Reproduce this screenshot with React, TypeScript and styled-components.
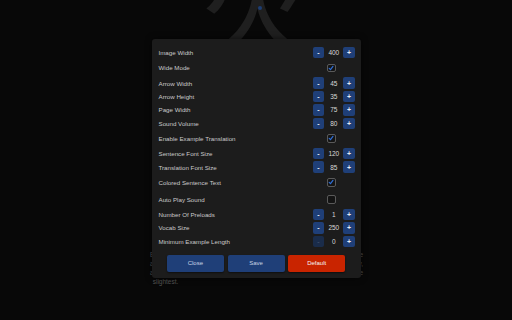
import * as React from "react";
import styled, {createGlobalStyle} from "styled-components";

const GlobalStyle = createGlobalStyle`
  html, body {
    margin: 0;
    padding: 0;
    width: 512px;
    height: 320px;
    overflow: hidden;
    background: #080808;
    font-family: "Liberation Sans", Arial, sans-serif;
  }
`;

interface Setting {
    label: string
    kind: "number" | "check"
    value?: number
    checked?: boolean
    minDisabled?: boolean
}

const settings: Setting[] = [
    {label: "Image Width", kind: "number", value: 400},
    {label: "Wide Mode", kind: "check", checked: true},
    {label: "Arrow Width", kind: "number", value: 45},
    {label: "Arrow Height", kind: "number", value: 35},
    {label: "Page Width", kind: "number", value: 75},
    {label: "Sound Volume", kind: "number", value: 80},
    {label: "Enable Example Translation", kind: "check", checked: true},
    {label: "Sentence Font Size", kind: "number", value: 120},
    {label: "Translation Font Size", kind: "number", value: 85},
    {label: "Colored Sentence Text", kind: "check", checked: true},
    {label: "Auto Play Sound", kind: "check", checked: false},
    {label: "Number Of Preloads", kind: "number", value: 1},
    {label: "Vocab Size", kind: "number", value: 250},
    {label: "Minimum Example Length", kind: "number", value: 0, minDisabled: true},
];

const Stage = styled.div`
  position: relative;
  width: 512px;
  height: 320px;
  overflow: hidden;
  display: flex;
  flex-direction: column;
`;

const Kanji = styled.div`
  font-family: "Noto Sans CJK JP", "Noto Sans CJK SC", sans-serif;
  font-size: 120px;
  line-height: 1;
  height: 120px;
  flex-shrink: 0;
  color: #1f1f1f;
  text-align: center;
  margin: -60px 0 0 4px;
  position: relative;
`;

const KanjiDot = styled.span`
  position: absolute;
  left: 254px;
  top: 66px;
  width: 4px;
  height: 4px;
  border-radius: 50%;
  background: #1d3e74;
`;

const Translation = styled.div`
  width: 213px;
  margin: auto 0 34.5px 150px;
  font-size: 6.5px;
  line-height: 9px;
  color: #555;
`;

const TranslationBody = styled.p`
  margin: 0;
  text-align: justify;
  text-align-last: justify;
`;

const TranslationEnd = styled.p`
  margin: 0 0 0 2.7px;
`;

const Overlay = styled.div`
  position: absolute;
  inset: 0;
  display: flex;
  align-items: center;
  justify-content: center;
  padding-bottom: 3px;
  box-sizing: border-box;
`;

const Panel = styled.div`
  width: 209px;
  height: 239px;
  box-sizing: border-box;
  padding: 7px 5.7px 0 7px;
  background: #1c1c1c;
  border-radius: 3px;
  box-shadow: 0 0 6px rgba(0, 0, 0, 0.6);
  display: flex;
  flex-direction: column;
`;

const Row = styled.div<{ $kind: "number" | "check" }>`
  height: ${p => p.$kind === "number" ? "13.4px" : "17px"};
  display: flex;
  align-items: center;
  justify-content: space-between;
`;

const Label = styled.span`
  font-size: 6.2px;
  color: #cacaca;
`;

const Controls = styled.div`
  width: 42px;
  display: flex;
  align-items: center;
`;

const StepButton = styled.div<{ $disabled?: boolean }>`
  width: 11.4px;
  height: 11.4px;
  border-radius: 2px;
  background: ${p => p.$disabled ? "#1a2c4a" : "#1f3f78"};
  color: ${p => p.$disabled ? "#3b4a63" : "#e6ecf5"};
  font-size: 7px;
  font-weight: bold;
  display: flex;
  align-items: center;
  justify-content: center;
`;

const Value = styled.span`
  flex: 1;
  text-align: center;
  font-size: 6.5px;
  color: #d8d8d8;
`;

const CheckBox = styled.div`
  width: 8.7px;
  height: 8.7px;
  margin-left: 14px;
  box-sizing: border-box;
  border: 1px solid #5a5a5a;
  border-radius: 2px;
  background: #141414;
  display: flex;
  align-items: center;
  justify-content: center;
`;

const Footer = styled.div`
  margin-top: 6.7px;
  padding-right: 1.3px;
  display: flex;
  justify-content: center;
  gap: 3.7px;
`;

const ActionButton = styled.div<{ $tone: "blue" | "red" }>`
  width: 57px;
  height: 17px;
  border-radius: 2px;
  background: ${p => p.$tone === "red" ? "#c92400" : "#1f3f78"};
  color: ${p => p.$tone === "red" ? "#f4f4f4" : "#c9d3e3"};
  font-size: 6px;
  display: flex;
  align-items: center;
  justify-content: center;
  box-shadow: 0 1px 2px rgba(0, 0, 0, 0.5);
`;

const Check = () =>
    <svg width="6" height="6" viewBox="0 0 10 10">
        <path d="M2 5.5 L4.2 7.8 L8.2 2.2" fill="none" stroke="#2f6fd8" strokeWidth="2" strokeLinecap="round"/>
    </svg>;

const SettingRow = ({setting}: { setting: Setting }) =>
    <Row $kind={setting.kind}>
        <Label>{setting.label}</Label>
        <Controls>
            {setting.kind === "number" ? <>
                <StepButton $disabled={setting.minDisabled}>-</StepButton>
                <Value>{setting.value}</Value>
                <StepButton>+</StepButton>
            </> : <CheckBox>{setting.checked && <Check/>}</CheckBox>}
        </Controls>
    </Row>;

const App = () =>
    <Stage>
        <GlobalStyle/>
        <Kanji>火<KanjiDot/></Kanji>
        <Translation>
            <TranslationBody>
                Even when the wind blew hard against the walls of the old wooden house all through the night,
                the small flame in the hearth kept on burning quietly, and it did not waver in the
            </TranslationBody>
            <TranslationEnd>slightest.</TranslationEnd>
        </Translation>
        <Overlay>
            <Panel>
                {settings.map(s => <SettingRow key={s.label} setting={s}/>)}
                <Footer>
                    <ActionButton $tone="blue">Close</ActionButton>
                    <ActionButton $tone="blue">Save</ActionButton>
                    <ActionButton $tone="red">Default</ActionButton>
                </Footer>
            </Panel>
        </Overlay>
    </Stage>;

export default App;
